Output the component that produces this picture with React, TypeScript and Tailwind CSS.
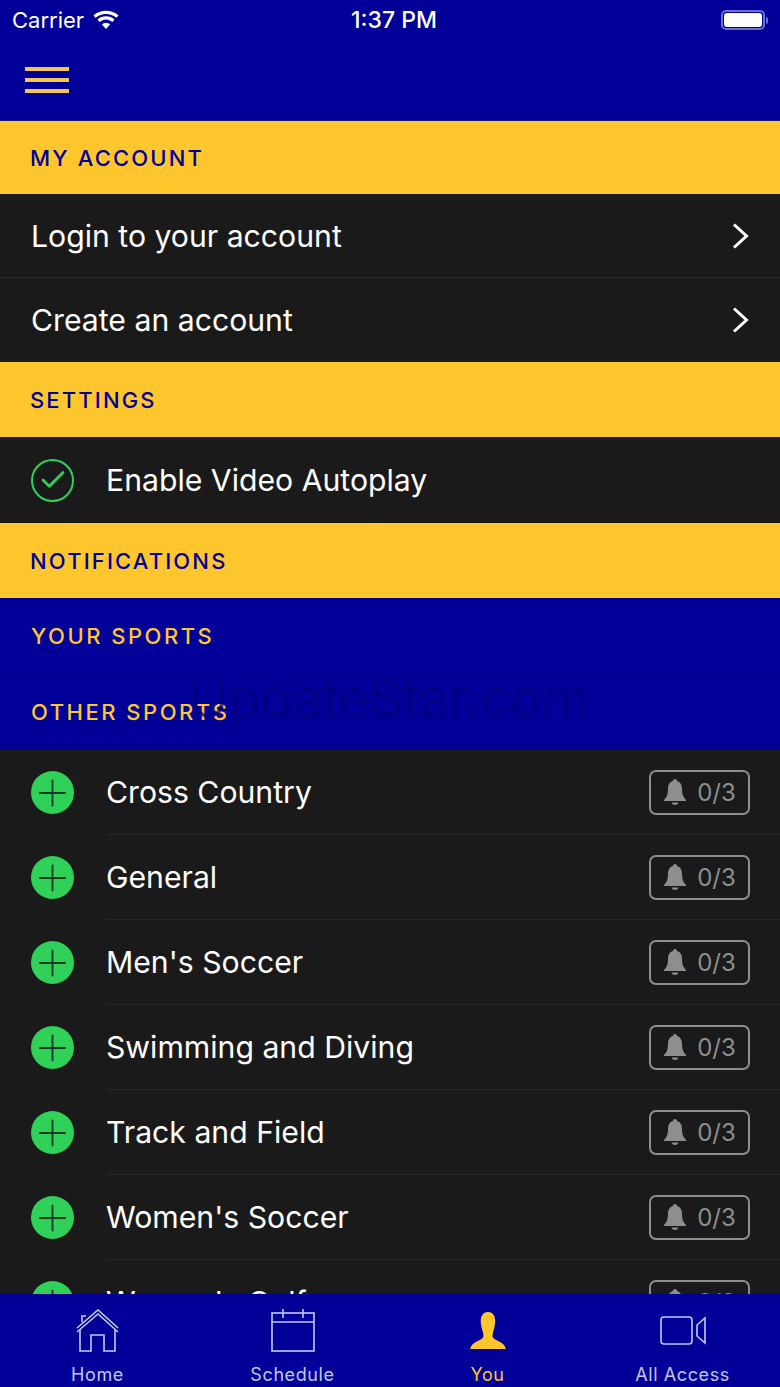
import { Plus, Check } from 'lucide-react';

const sports = ['Cross Country', 'General', "Men's Soccer", 'Swimming and Diving', 'Track and Field', "Women's Soccer", "Women's Golf"];

function SectionHeader({ title, height }: { title: string; height: string }) {
  return (
    <div className={`${height} flex items-center bg-[#ffc62d] pl-[30px] pt-[1px] text-[22px] font-medium tracking-[2.15px] text-[#000099]`}>
      {title}
    </div>
  );
}

function SubHeader({ title }: { title: string }) {
  return (
    <div className="flex h-[76px] items-center border-b border-[#000066] bg-[#000099] pl-[31px] pt-[2px] text-[22px] font-medium tracking-[2.5px] text-[#ffc62d]">
      {title}
    </div>
  );
}

function LinkRow({ title, last }: { title: string; last?: boolean }) {
  return (
    <div className={`flex h-[84px] items-center justify-between pl-[31px] pr-[31px] text-[30.2px] text-white ${last ? '' : 'border-b border-[#2a2a2a]'}`}>
      <span className="pt-[2px]">{title}</span>
      <svg width="17" height="26" viewBox="0 0 17 26" fill="none" stroke="white" strokeWidth="3">
        <path d="M2 1.5 L14.5 13 L2 24.5" />
      </svg>
    </div>
  );
}

function BellIcon() {
  return (
    <svg width="22" height="26" viewBox="0 0 22 26" fill="currentColor">
      <path d="M11 0 C12.2 0 13 0.8 13 2 C16.6 3 18 6 18 10 C18 15 19 18 22 21 V22 H0 V21 C3 18 4 15 4 10 C4 6 5.4 3 9 2 C9 0.8 9.8 0 11 0 Z" />
      <path d="M7.5 23.5 H14.5 C14 25.2 12.6 26 11 26 C9.4 26 8 25.2 7.5 23.5 Z" />
    </svg>
  );
}

function SportRow({ name }: { name: string }) {
  return (
    <div className="flex h-[85px] shrink-0 items-center pl-[31px]">
      <div className="flex h-[43px] w-[43px] shrink-0 items-center justify-center rounded-full bg-[#30d158] text-[#123a20]">
        <Plus size={44} strokeWidth={1} />
      </div>
      <div className="ml-[32px] flex h-full flex-1 items-center justify-between border-b border-[#262626] pr-[30px]">
        <span className="pt-[1px] text-[30.2px] text-white">{name}</span>
        <div className="flex h-[45px] w-[101px] items-center justify-center gap-[11px] rounded-[7px] border-2 border-[#8e8e8e] pl-[1px] text-[24px] text-[#8e8e8e]">
          <BellIcon />
          <span className="pt-[1px]">0/3</span>
        </div>
      </div>
    </div>
  );
}

function HomeIcon() {
  return (
    <svg width="44" height="44" viewBox="0 0 44 44" fill="none" stroke="#c3c8f0" strokeWidth="1.6">
      <path d="M1 19 L22 1 L42 19" />
      <path d="M1 23 L22 5 L42 23" />
      <path d="M6 13 V7 H10" />
      <path d="M4 20 V42 H15 V26 H28 V42 H39 V20" />
    </svg>
  );
}

function ScheduleIcon() {
  return (
    <svg width="44" height="44" viewBox="0 0 44 44" fill="none" stroke="#c3c8f0" strokeWidth="1.6">
      <rect x="1" y="4" width="42" height="38" />
      <path d="M1 13 H43" />
      <path d="M12 0 V9 M32 0 V9" />
    </svg>
  );
}

function YouIcon() {
  return (
    <svg width="36" height="38" viewBox="0 0 36 38" fill="#ffc62d">
      <path d="M18 0 C24 0 26 6 25 12 C24.5 17 22.5 20 22.5 24 C22.5 28 31 29 34 33 C35 34.5 35.5 36 36 37 H0 C0.5 36 1 34.5 2 33 C5 29 13.5 28 13.5 24 C13.5 20 11.5 17 11 12 C10 6 12 0 18 0 Z" />
    </svg>
  );
}

function VideoIcon() {
  return (
    <svg width="46" height="30" viewBox="0 0 46 30" fill="none" stroke="#c3c8f0" strokeWidth="1.6">
      <rect x="1" y="1" width="31" height="27" rx="3" />
      <path d="M45 2 V27 L37 20 V9 Z" />
    </svg>
  );
}

function TabItem({ label, active, children }: { label: string; active?: boolean; children: React.ReactNode }) {
  return (
    <div className="flex w-[195px] flex-col items-center">
      <div className="flex h-[48px] items-center justify-center">{children}</div>
      <span className={`mt-[8px] text-[18px] font-normal leading-[24px] tracking-[0.6px] ${active ? 'text-[#ffc62d]' : 'text-[#c3c8f0]'}`}>
        {label}
      </span>
    </div>
  );
}

export default function App() {
  return (
    <div className="relative flex h-[1387px] w-[780px] flex-col overflow-hidden bg-[#1a1a1a] font-['Inter',sans-serif]">
      <div className="h-[121px] shrink-0 border-b border-[#1a1a66] bg-[#000099]">
        <div className="flex h-[40px] items-center justify-between px-[12px] text-white">
          <div className="flex w-[200px] items-center gap-[9px] text-[22px]">
            <span>Carrier</span>
            <svg width="26" height="20" viewBox="0 0 26 20" fill="white">
              <path d="M13 19 L9 14.5 C11 12.6 15 12.6 17 14.5 Z" />
              <path d="M6.6 12 L4.4 9.6 C9 5.2 17 5.2 21.6 9.6 L19.4 12 C15.6 8.6 10.4 8.6 6.6 12 Z" />
              <path d="M2.6 7.8 L0.4 5.4 C7.2 -0.8 18.8 -0.8 25.6 5.4 L23.4 7.8 C17.8 2.6 8.2 2.6 2.6 7.8 Z" />
            </svg>
          </div>
          <span className="ml-[8px] text-[23px] font-medium">1:37 PM</span>
          <div className="flex w-[200px] items-center justify-end">
            <div className="flex h-[20px] w-[44px] items-center justify-center rounded-[5px] border-2 border-[#6a6fd0]">
              <div className="h-[14px] w-[38px] rounded-[3px] bg-white" />
            </div>
            <div className="ml-[1px] h-[7px] w-[2px] rounded-r-sm bg-[#6a6fd0]" />
          </div>
        </div>
        <div className="ml-[25px] mt-[27px] flex w-[44px] flex-col gap-[7px]">
          <div className="h-[4px] bg-[#f5c452]" />
          <div className="h-[4px] bg-[#f5c452]" />
          <div className="h-[4px] bg-[#f5c452]" />
        </div>
      </div>

      <SectionHeader title="MY ACCOUNT" height="h-[73px] shrink-0" />
      <LinkRow title="Login to your account" />
      <LinkRow title="Create an account" last />
      <SectionHeader title="SETTINGS" height="h-[75px] shrink-0" />
      <div className="flex h-[86px] shrink-0 items-center pl-[31px] text-[30.2px] text-white">
        <div className="flex h-[43px] w-[43px] items-center justify-center rounded-full border-2 border-[#30d158] text-[#30d158]">
          <Check size={30} strokeWidth={2.2} />
        </div>
        <span className="ml-[32px] pt-[1px]">Enable Video Autoplay</span>
      </div>
      <SectionHeader title="NOTIFICATIONS" height="h-[75px] shrink-0" />
      <SubHeader title="YOUR SPORTS" />
      <SubHeader title="OTHER SPORTS" />

      <div className="flex min-h-0 flex-1 flex-col overflow-hidden">
        {sports.map((s) => (
          <SportRow key={s} name={s} />
        ))}
      </div>

      <div className="flex h-[93px] shrink-0 bg-[#000099] pt-[13px]">
        <TabItem label="Home"><HomeIcon /></TabItem>
        <TabItem label="Schedule"><ScheduleIcon /></TabItem>
        <TabItem label="You" active><YouIcon /></TabItem>
        <TabItem label="All Access"><VideoIcon /></TabItem>
      </div>

      {/* watermark over the page */}
      <div className="pointer-events-none absolute left-[189px] top-[664px] text-[53.7px] font-light leading-[68px] text-[#00007a] opacity-70">
        UpdateStar.com
      </div>
    </div>
  );
}
